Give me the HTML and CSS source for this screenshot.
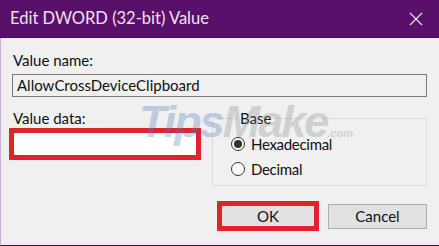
FILE: index.html
```html
<!DOCTYPE html>
<html>
<head>
<meta charset="utf-8">
<link rel="stylesheet" href="styles.css">
</head>
<body>
<div class="window">
  <div class="titlebar">
    <span class="title">Edit DWORD (32-bit) Value</span>
    <svg class="close" width="14" height="14" viewBox="0 0 14 14"><path d="M1 1 L13 13 M13 1 L1 13" stroke="#f3e2f5" stroke-width="1.2" fill="none"/></svg>
  </div>
  <div class="content">
    <div class="label">Value name:</div>
    <div class="namebox">AllowCrossDeviceClipboard</div>
    <div class="row">
      <div class="datacol">
        <div class="label">Value data:</div>
        <div class="databox"></div>
      </div>
      <fieldset class="base">
        <legend>Base</legend>
        <div class="radio"><span class="dot checked"></span><span>Hexadecimal</span></div>
        <div class="radio"><span class="dot"></span><span>Decimal</span></div>
      </fieldset>
    </div>
    <div class="buttons">
      <div class="btn ok">OK</div>
      <div class="btn cancel">Cancel</div>
    </div>
  </div>
  <div class="watermark"><span class="tips">Tips</span><span class="make">Make</span><span class="com">.com</span></div>
</div>
</body>
</html>
```
FILE: styles.css
```css
html, body {
  margin: 0;
  padding: 0;
}
body {
  width: 439px;
  height: 246px;
  overflow: hidden;
  font-family: "Lato", "Noto Sans", sans-serif;
}
.window {
  position: relative;
  width: 439px;
  height: 246px;
  box-sizing: border-box;
  background: #f0f0f0;
  border-left: 1px solid #cdb3d3;
  border-bottom: 1px solid #2a1530;
  box-shadow: inset 0 -4px 0 #f4e8f6, inset 1px 0 0 #f4e8f6;
  display: flex;
  flex-direction: column;
}
.titlebar {
  height: 38px;
  margin-left: -1px;
  background: #58106a;
  border-bottom: 1px solid #4d0c5d;
  box-sizing: border-box;
  display: flex;
  align-items: center;
  justify-content: space-between;
  padding: 0 16px 0 10px;
}
.title {
  color: #f3e2f5;
  font-size: 16.5px;
  padding-bottom: 1px;
}
.close {
  display: block;
}
.content {
  padding: 12px 12px 0 11px;
  color: #111;
  font-size: 15px;
}
.label {
  line-height: 20px;
  height: 20px;
  padding-left: 1px;
}
.namebox {
  margin-top: 4px;
  height: 23px;
  box-sizing: border-box;
  border: 1px solid #7a7a7a;
  padding-left: 4px;
  line-height: 20px;
}
.row {
  display: flex;
  margin-top: 11px;
  gap: 11px;
}
.datacol {
  width: 189px;
}
.databox {
  height: 32px;
  box-sizing: border-box;
  margin-left: -3px;
  border: 5px solid #e0222c;
  background: #fff;
}
.base {
  flex: 1;
  margin: 0;
  padding: 3px 0 4px 18px;
  border: 1px solid #dcdcdc;
  min-width: 0;
}
.base legend {
  padding: 0 2px;
  margin-left: 7px;
  line-height: 20px;
}
.radio {
  display: flex;
  align-items: center;
  height: 25px;
  gap: 6px;
  letter-spacing: -0.3px;
}
.dot {
  width: 14px;
  height: 14px;
  box-sizing: border-box;
  border: 1px solid #333;
  border-radius: 50%;
  background: #fff;
  position: relative;
}
.dot.checked::after {
  content: "";
  position: absolute;
  left: 2px;
  top: 2px;
  width: 8px;
  height: 8px;
  border-radius: 50%;
  background: #333;
}
.buttons {
  display: flex;
  justify-content: flex-end;
  align-items: center;
  gap: 9px;
  margin-top: 15px;
}
.btn {
  box-sizing: border-box;
  background: #e1e1e1;
  display: flex;
  align-items: center;
  justify-content: center;
}
.ok {
  width: 102px;
  height: 30px;
  border: 5px solid #e0222c;
}
.cancel {
  width: 99px;
  height: 25px;
  border: 1px solid #adadad;
}
.watermark {
  position: absolute;
  left: 138px;
  top: 96px;
  font-family: "Liberation Sans", sans-serif;
  font-weight: bold;
  font-style: italic;
  font-size: 45px;
  letter-spacing: -2px;
  opacity: 0.3;
  pointer-events: none;
}
.tips { color: #4f78b8; }
.make { color: #8a8a8a; }
.com { color: #8a8a8a; font-size: 11px; letter-spacing: 0; }
```
